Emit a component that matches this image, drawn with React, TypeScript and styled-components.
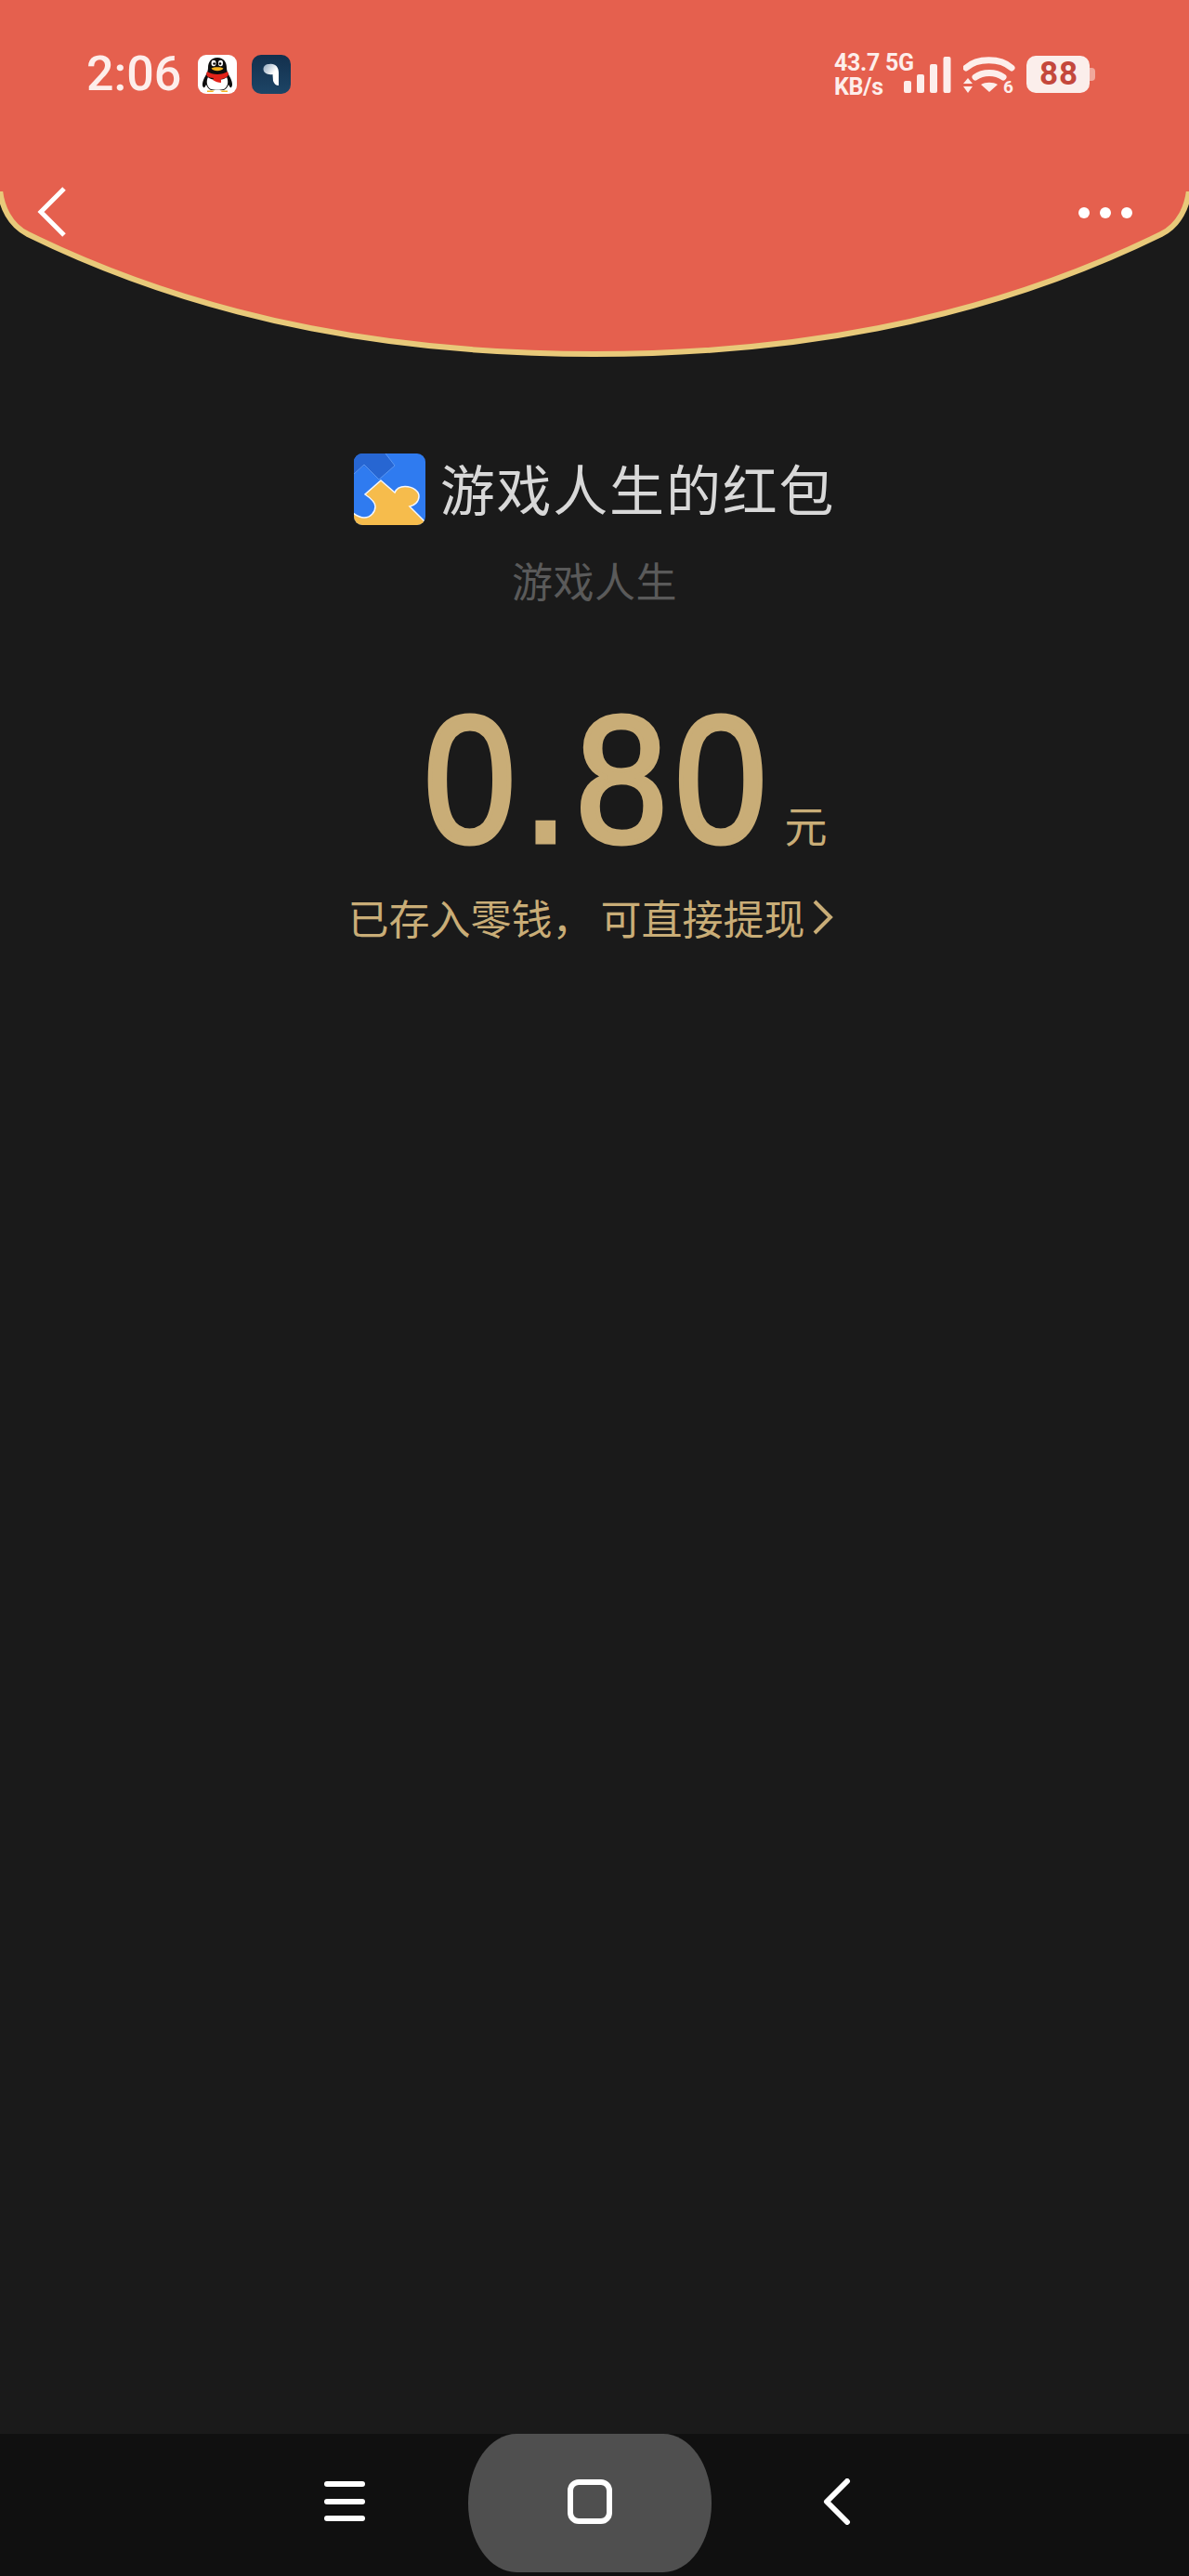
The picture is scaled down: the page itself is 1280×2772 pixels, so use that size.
import React from "react";
import styled, { createGlobalStyle } from "styled-components";

const Global = createGlobalStyle`
  html, body { margin: 0; padding: 0; background: #1a1a1a; }
  * { box-sizing: border-box; }
`;
const CJK = `"Noto Sans CJK SC", "Noto Sans", sans-serif`;

const Page = styled.div`
  width: 1280px; height: 2772px; display: flex; flex-direction: column;
  background: #1a1a1a; font-family: Roboto, ${CJK}; overflow: hidden;
`;
const Header = styled.header`
  position: relative; height: 390px; flex: none; color: #fdeeeb;
`;
const HeaderShape = styled.svg`
  position: absolute; left: 0; top: 0; width: 1280px; height: 390px;
`;
const StatusBar = styled.div`
  position: relative; height: 160px; padding: 57px 107px 0 93px;
  display: flex; justify-content: space-between; align-items: flex-start;
`;
const StatusLeft = styled.div`display: flex; align-items: center; gap: 16px; height: 46px;`;
const Time = styled.span`
  font-size: 52px; line-height: 46px; font-weight: 500; width: 104px;
`;
const StatusRight = styled.div`display: flex; align-items: flex-start;`;
const Speed = styled.div`
  width: 92px; margin-right: -17px; margin-top: -2px; font-size: 25px; line-height: 26px; font-weight: 700;
  white-space: nowrap; letter-spacing: -0.3px;
`;
const TopNav = styled.nav`
  position: relative; height: 110px; padding: 40px 61px 0 40px;
  display: flex; justify-content: space-between; align-items: flex-start;
`;
const Dots = styled.div`display: flex; gap: 11px; margin-top: 23px;`;
const Dot = styled.i`display: block; width: 12px; height: 12px; border-radius: 50%; background: #fff;`;

const Main = styled.main`
  flex: 1; display: flex; flex-direction: column; align-items: center; padding-top: 98px;
`;
const TitleRow = styled.div`display: flex; align-items: center; gap: 16px; height: 77px;`;
const Title = styled.h1`
  margin: -5px 0 0; font: 400 59px/77px ${CJK}; letter-spacing: 1.8px; color: #d8d8d8;
`;
const Sub = styled.div`
  margin-top: 31px; font: 400 44px/56px ${CJK}; letter-spacing: 0.5px; color: #5a5a5a;
`;
const AmountRow = styled.div`
  margin-top: 92px; margin-left: 66px; display: flex; align-items: baseline; color: #c9ad77; height: 190px;
`;
const Amount = styled.span`
  display: block; width: 389px; font: 400 194px/190px "Liberation Sans", sans-serif;
  letter-spacing: 8px; -webkit-text-stroke: 5px #c9ad77;
  transform: scaleX(0.92); transform-origin: left center; white-space: nowrap;
`;
const Unit = styled.span`font: 400 46px/56px ${CJK};`;
const Note = styled.div`
  margin-top: 23px; margin-left: -8px; display: flex; align-items: center; color: #c9ad77;
  font: 400 44px/60px ${CJK};
  svg { margin-left: 7px; }
`;
const Comma = styled.span`margin-right: 8px;`;
const BottomNav = styled.nav`
  height: 153px; flex: none; background: #101010; overflow: hidden; position: relative;
  display: flex; align-items: flex-start; justify-content: flex-start; padding-left: 349px;
`;
const NavSlot = styled.div`height: 145px; display: flex; align-items: center;`;
const HomePill = styled.div`
  width: 262px; height: 149px; margin-left: 111px; margin-right: 119px; padding-bottom: 4px; background: #4f4f4f;
  border-radius: 52px / 50%; display: flex; align-items: center; justify-content: center;
`;
const HomeSquare = styled.div`
  width: 48px; height: 48px; border: 6px solid #fff; border-radius: 12px;
`;
const Bars = styled.div`display: flex; flex-direction: column; gap: 12.5px; width: 44px;`;
const Bar = styled.i`display: block; height: 6px; border-radius: 3px; background: #fff;`;

const Penguin = () => (
  <svg width="42" height="42" viewBox="0 0 42 42">
    <rect width="42" height="42" rx="9" fill="#fff" />
    <path d="M21 3C14 3 11 8 11 14C11 17 10 19 8 23C5 28 4 33 6 35C7 36 8 34 9 32C10 35 12 37 14 38H28C30 37 32 35 33 32C34 34 35 36 36 35C38 33 37 28 34 23C32 19 31 17 31 14C31 8 28 3 21 3Z" fill="#0d0d0d" />
    <path d="M11 24C14 28 28 28 31 24C33 28 33 34 28 37C24 38 18 38 14 37C9 34 9 28 11 24Z" fill="#fff" />
    <path d="M10 18C16 22 26 22 32 18C33 20 33 22 32 23C30 25 27 26 25 26L25 30C22 30 19 29 16 27L17 25C14 25 11 24 10 23C9 21 9 20 10 18Z" fill="#e2231a" />
    <ellipse cx="17" cy="9" rx="2.500" ry="3.200" fill="#fff" /><ellipse cx="24.500" cy="9" rx="2.500" ry="3.200" fill="#fff" />
    <circle cx="17.600" cy="9.500" r="1.300" fill="#000" /><circle cx="24" cy="9.500" r="1.300" fill="#000" />
    <path d="M14.500 14.500c3-1.800 10-1.800 13 0-2 3.500-11 3.500-13 0z" fill="#f5b21c" />
    <path d="M10 38.500h8l-2 1.500h-6zM24 38.500h8v1.500h-6z" fill="#f5b21c" />
  </svg>
);
const AppIcon = () => (
  <svg width="42" height="42" viewBox="0 0 42 42">
    <defs>
      <linearGradient id="navy" x1="0" y1="0" x2="0" y2="1"><stop offset="0" stopColor="#13304d" /><stop offset="1" stopColor="#1d4566" /></linearGradient>
      <linearGradient id="drop" x1="0" y1="0" x2="1" y2="1"><stop offset="0" stopColor="#8fa6bd" /><stop offset="0.55" stopColor="#fff" /></linearGradient>
    </defs>
    <rect width="42" height="42" rx="10" fill="url(#navy)" />
    <path d="M19 10C25 9 29 13 29 19V33C26 33 24 31 23 28L22.500 21C17 22 12.500 19 12.500 15.500C12.500 12 15 10 19 10Z" fill="url(#drop)" />
  </svg>
);
const Signal = () => (
  <svg width="51" height="39" viewBox="0 0 51 39" style={{ marginTop: 4 }}>
    <rect x="0" y="26" width="8" height="13" rx="2" fill="#fdeeeb" />
    <rect x="14" y="19" width="8" height="20" rx="2" fill="#fdeeeb" />
    <rect x="28" y="8" width="8" height="31" rx="2" fill="#fdeeeb" />
    <rect x="42.500" y="0" width="8" height="39" rx="2" fill="#fdeeeb" />
  </svg>
);
const Wifi = () => (
  <svg width="60" height="48" viewBox="0 0 60 48" style={{ marginLeft: 13, marginTop: 4, marginRight: -4 }}>
    <path d="M3 12C15 1 40 1 52 12" fill="none" stroke="#fdeeeb" strokeWidth="7" strokeLinecap="round" />
    <path d="M13 22c8-6 22-6 30 0" fill="none" stroke="#fdeeeb" strokeWidth="7" strokeLinecap="round" />
    <path d="M19 30c5-3 13-3 18 0l-9 8z" fill="#fdeeeb" />
    <path d="M5 23l5 6H0zM5 39l5-7H0z" fill="#fdeeeb" />
    <text x="43" y="39" fontFamily="Roboto, sans-serif" fontWeight="700" fontSize="19" fill="#fdeeeb">6</text>
  </svg>
);
const BatteryBox = styled.div`
  width: 68px; height: 40px; margin-left: 12px; margin-top: 3px; padding-left: 2px; border-radius: 10px; background: #fbeeeb;
  color: #c4483c; font: 700 35px/40px Roboto, sans-serif; text-align: center; position: relative; letter-spacing: 1px;
  &::after { content: ""; position: absolute; left: 68px; top: 13px; width: 6px; height: 14px; border-radius: 0 4px 4px 0; background: #f0a79c; }
`;
const Puzzle = () => (
  <svg width="77" height="77" viewBox="0 0 77 77">
    <defs><clipPath id="pz"><rect width="77" height="77" rx="9" /></clipPath></defs>
    <g clipPath="url(#pz)">
      <rect width="77" height="77" fill="#2f7bf0" />
      <path d="M0 0h34l10 13-17 15-16-15L0 22z" fill="#2766d2" />
      <path d="M0 22l11-10 16 16 17-15-10-13" fill="none" stroke="#5b97f2" strokeWidth="1" />
      <path d="M29 29L44 42C46 37 50 35.500 55 35.500C64 35.500 70 41 70 46C70 52 65 56 60 57L78 75V78H-1V64C3 67 7 69 11 69C18 69 23 63 23 57C23 52 18 48 12 44Z" fill="#f6bc4c" stroke="#f4f7ff" strokeWidth="1.500" />
    </g>
  </svg>
);

export default function App() {
  return (
    <Page>
      <Global />
      <Header>
        <HeaderShape viewBox="0 0 1280 390">
          <path d="M0 205C2 222 10 242 30 252C230 350 440 381 640 381C840 381 1050 350 1250 252C1270 242 1278 222 1280 205" fill="#e5604e" stroke="#e8c97a" strokeWidth="6" />
          <rect x="0" y="0" width="1280" height="206" fill="#e5604e" />
        </HeaderShape>
        <StatusBar>
          <StatusLeft><Time>2:06</Time><Penguin /><AppIcon /></StatusLeft>
          <StatusRight>
            <Speed>43.7 5G<br />KB/s</Speed>
            <Signal /><Wifi />
            <BatteryBox>88</BatteryBox>
          </StatusRight>
        </StatusBar>
        <TopNav>
          <svg width="32" height="56" viewBox="0 0 32 56"><path d="M29 3L4 28l25 25" fill="none" stroke="#fff" strokeWidth="5" /></svg>
          <Dots><Dot /><Dot /><Dot /></Dots>
        </TopNav>
      </Header>
      <Main>
        <TitleRow><Puzzle /><Title>游戏人生的红包</Title></TitleRow>
        <Sub>游戏人生</Sub>
        <AmountRow><Amount>0.80</Amount><Unit>元</Unit></AmountRow>
        <Note>已存入零钱<Comma>，</Comma>可直接提现
          <svg width="24" height="38" viewBox="0 0 24 38"><path d="M3 2l17 17L3 36" fill="none" stroke="#c9ad77" strokeWidth="4" /></svg>
        </Note>
      </Main>
      <BottomNav>
        <NavSlot><Bars><Bar /><Bar /><Bar /></Bars></NavSlot>
        <HomePill><HomeSquare /></HomePill>
        <NavSlot>
          <svg width="32" height="50" viewBox="0 0 32 50"><path d="M27 3L5 25l22 22" fill="none" stroke="#fff" strokeWidth="6" strokeLinecap="round" strokeLinejoin="round" /></svg>
        </NavSlot>
      </BottomNav>
    </Page>
  );
}
